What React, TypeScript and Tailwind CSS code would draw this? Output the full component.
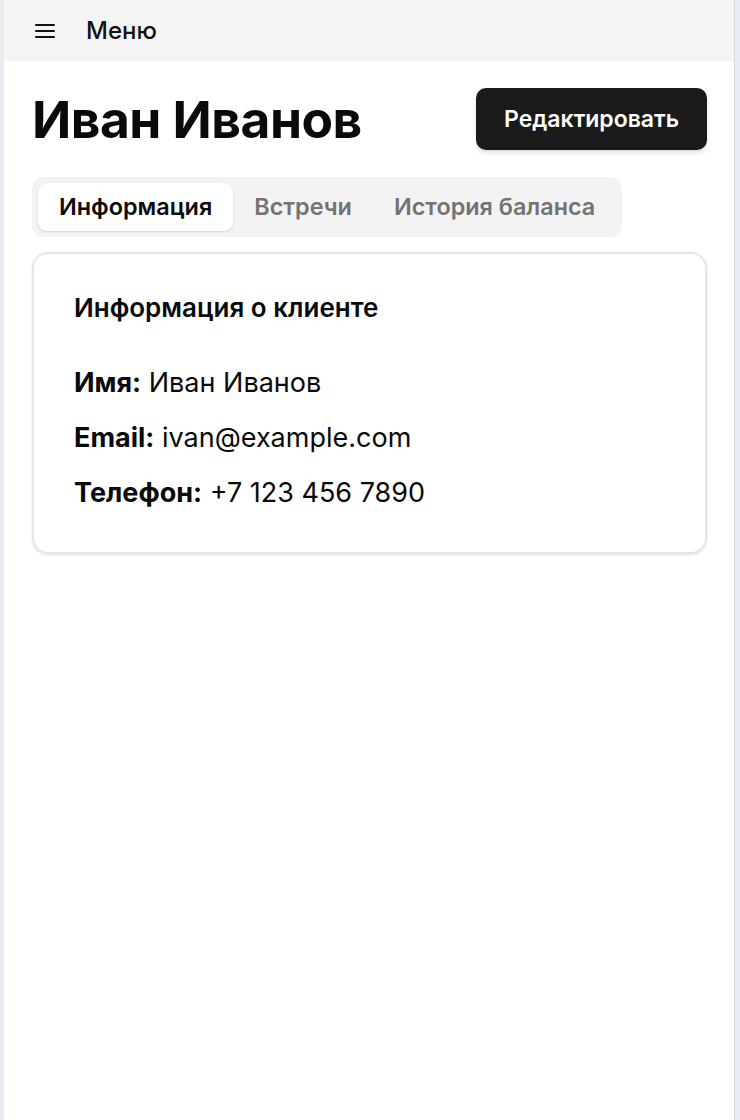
import { FunctionComponent } from "react";

const rows = [
    { label: "Имя:", value: "Иван Иванов" },
    { label: "Email:", value: "ivan@example.com" },
    { label: "Телефон:", value: "+7 123 456 7890" },
];

const App: FunctionComponent = () => {
    return (
        <div
            className="min-h-[1120px] bg-[#e9ebf3] pl-[4px] pr-[5px] flex"
            style={{ fontFamily: "Inter, 'Noto Sans', sans-serif" }}>
            <div className="flex-1 bg-white border-r border-[#d9dae0] min-h-[1120px]">
                <header className="h-[61px] bg-[#f4f4f4] flex items-center pl-[31px]">
                    <svg width="20" height="16" viewBox="0 0 20 16" className="text-[#111]">
                        <path d="M1 2h18M1 8h18M1 14h18" stroke="currentColor" strokeWidth="2" strokeLinecap="round" />
                    </svg>
                    <span className="ml-[31px] text-[24px] font-medium text-[#111]">Меню</span>
                </header>

                <main className="pl-[28px] pr-[27px]">
                    <div className="flex items-center justify-between mt-[27px]">
                        <h1 className="text-[51.5px] leading-[62px] font-bold text-[#0a0a0a] tracking-[-0.5px]">Иван Иванов</h1>
                        <button className="h-[62px] px-[28px] rounded-[10px] bg-[#1a1a1a] text-white text-[23px] font-semibold shadow-md">
                            Редактировать
                        </button>
                    </div>

                    <div className="mt-[27px] inline-flex items-center p-[6px] bg-[#f3f3f3] rounded-[12px] h-[60px]">
                        <div className="h-[48px] px-[21px] flex items-center bg-white rounded-[9px] shadow-sm text-[23.4px] font-semibold text-[#0a0a0a]">
                            Информация
                        </div>
                        <div className="h-[48px] px-[21px] flex items-center text-[23.4px] font-semibold text-[#737373]">
                            Встречи
                        </div>
                        <div className="h-[48px] px-[21px] flex items-center text-[23.4px] font-semibold text-[#737373]">
                            История баланса
                        </div>
                    </div>

                    <div className="mt-[15px] border-2 border-[#e5e5e5] rounded-[16px] shadow-sm px-[40px] pt-[36px] pb-[42px]">
                        <h2 className="text-[26px] leading-[36px] font-semibold text-[#0a0a0a]">Информация о клиенте</h2>
                        <div className="mt-[40px] flex flex-col gap-[21px]">
                            {rows.map((row) => (
                                <p key={row.label} className="text-[27px] leading-[34px] text-[#0a0a0a]">
                                    <span className="font-bold">{row.label}</span> {row.value}
                                </p>
                            ))}
                        </div>
                    </div>
                </main>
            </div>
        </div>
    );
};

export default App;
